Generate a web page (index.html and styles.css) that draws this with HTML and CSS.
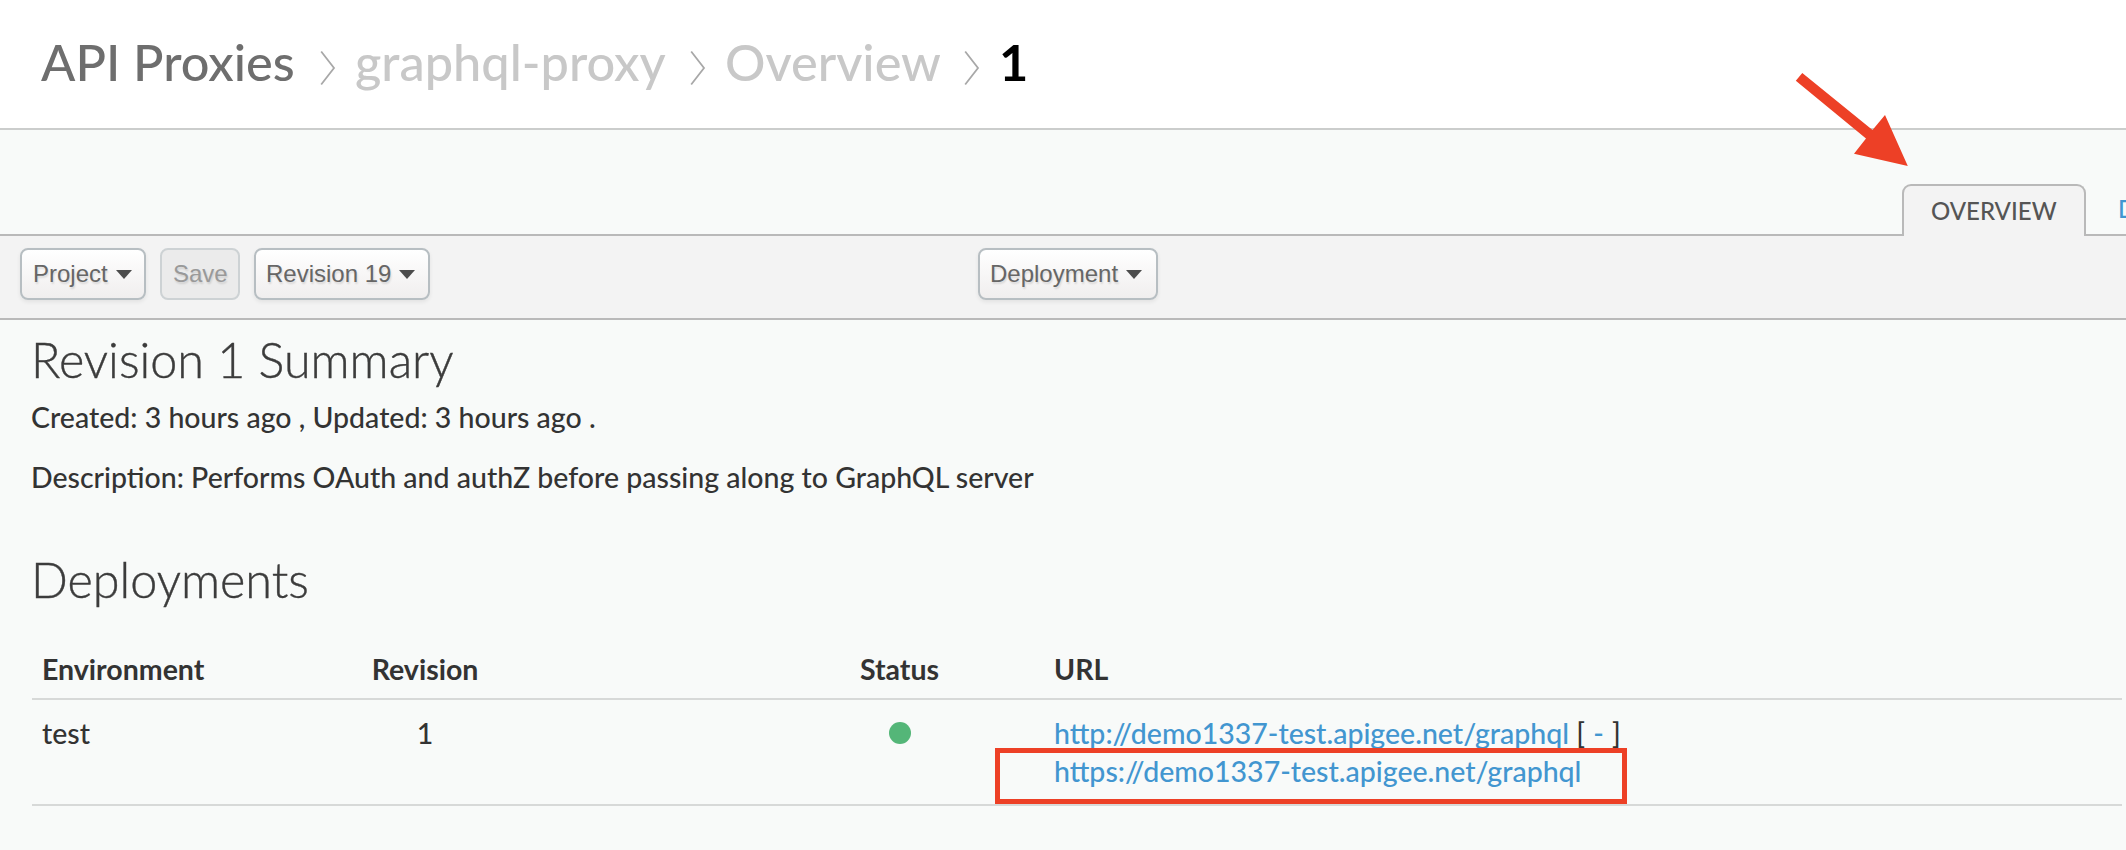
FILE: index.html
```html
<!DOCTYPE html>
<html lang="en">
<head>
<meta charset="utf-8">
<title>API Proxies - graphql-proxy</title>
<link rel="stylesheet" href="styles.css">
</head>
<body>
<header class="header">
  <nav class="crumbs">
    <a class="crumb crumb-root">API Proxies</a>
    <svg class="chevron" width="16" height="36" viewBox="0 0 16 36"><path d="M1.2 1.5 14 18 1.2 34.5"/></svg>
    <a class="crumb crumb-proxy">graphql-proxy</a>
    <svg class="chevron" width="16" height="36" viewBox="0 0 16 36"><path d="M1.2 1.5 14 18 1.2 34.5"/></svg>
    <a class="crumb crumb-view">Overview</a>
    <svg class="chevron" width="16" height="36" viewBox="0 0 16 36"><path d="M1.2 1.5 14 18 1.2 34.5"/></svg>
    <span class="crumb crumb-current">1</span>
  </nav>
</header>
<div class="tabs">
  <a class="tab tab-active">OVERVIEW</a>
  <a class="tab">D</a>
</div>
<div class="toolbar">
  <div class="group">
    <button class="btn btn-project">Project<i class="caret"></i></button>
    <button class="btn btn-save" disabled>Save</button>
    <button class="btn btn-revision">Revision 19<i class="caret"></i></button>
  </div>
  <button class="btn btn-deploy">Deployment<i class="caret"></i></button>
</div>
<main class="content">
  <h2 class="title">Revision 1 Summary</h2>
  <p class="meta">Created: 3 hours ago , Updated: 3 hours ago .</p>
  <p class="meta">Description: Performs OAuth and authZ before passing along to GraphQL server</p>
  <h2 class="title title-deploy">Deployments</h2>
  <div class="table">
    <div class="row row-head">
      <div>Environment</div>
      <div class="center">Revision</div>
      <div class="center status">Status</div>
      <div>URL</div>
    </div>
    <div class="row row-body">
      <div>test</div>
      <div class="center">1</div>
      <div class="center status"><span class="dot"></span></div>
      <div class="urls">
        <div><a class="link">http://demo1337-test.apigee.net/graphql</a> [ <a class="link toggle">-</a> ]</div>
        <div><a class="link">https://demo1337-test.apigee.net/graphql</a></div>
        <div class="highlight"></div>
      </div>
    </div>
  </div>
</main>
<svg class="arrow" width="114" height="96" viewBox="0 0 114 96"><path d="M8.3 3 78.5 60 91 45 113.8 96 60 83.7 72 68.5 1.8 10.7Z"/></svg>
</body>
</html>
```

FILE: styles.css
```css
* { box-sizing: border-box; }
body {
  margin: 0;
  height: 850px;
  position: relative;
  overflow: hidden;
  background: #f8faf9;
  color: #333;
  font: 500 28.5px/38px Lato, "Liberation Sans", sans-serif;
}
.header {
  height: 130px;
  padding: 32px 0 0 41px;
  background: #fff;
  border-bottom: 2px solid #cbcdcc;
}
.crumbs { display: flex; font-size: 50.5px; line-height: 60px; white-space: nowrap; }
.crumb { color: #c8c8c8; }
.crumb-root { width: 279px; color: #6e6e6e; }
.crumb-proxy { width: 335px; }
.crumb-view { width: 239px; }
.crumb-current { color: #000; font-weight: 700; }
.chevron { flex: none; margin: 18px 19px 0 0; fill: none; stroke: #a8a8a8; stroke-width: 1.8; }
.tabs {
  height: 106px;
  display: flex;
  align-items: flex-end;
  padding-left: 1902px;
  border-bottom: 2px solid #b9b9b9;
  overflow: visible;
}
.tab {
  flex: none;
  height: 50px;
  padding: 6px 0 0 32px;
  color: #4296d0;
  font-size: 24px;
  line-height: 38px;
}
.tab-active {
  width: 184px;
  height: 52px;
  margin-bottom: -2px;
  padding: 6px 0 0 27px;
  color: #555;
  background: #f3f3f3;
  border: 2px solid #b9b9b9;
  border-bottom: 0;
  border-radius: 9px 9px 0 0;
}
.toolbar {
  height: 84px;
  display: flex;
  padding: 12px 0 0 20px;
  background: #f3f3f3;
  border-bottom: 2px solid #b9b9b9;
}
.group { display: flex; gap: 14px; width: 958px; }
.btn {
  display: flex;
  align-items: center;
  height: 52px;
  padding: 0 0 0 10px;
  border: 2px solid #b7bec2;
  border-radius: 8px;
  background: linear-gradient(#fff, #f0eeee);
  box-shadow: 0 2px 4px rgba(0, 0, 0, .07);
  color: #666;
  font: 24px/28px "Liberation Sans", Arial, sans-serif;
  text-shadow: 1px 2px 2px rgba(0, 0, 0, .12);
}
.btn-project { width: 126px; padding-left: 11px; }
.btn-save { width: 80px; padding-left: 11px; color: #999; background: #ebebeb; border-color: #cdd2d4; box-shadow: none; }
.btn-revision { width: 176px; }
.btn-deploy { width: 180px; }
.caret {
  margin-left: 8px;
  border: 8.5px solid transparent;
  border-top: 9px solid #4c4c4c;
  border-bottom: 0;
}
.content { padding: 9px 4px 0 32px; }
.title {
  margin: 0 0 0 -1px;
  color: #3c3c3c;
  font-size: 48.5px;
  line-height: 60px;
  font-weight: 300;
  -webkit-text-stroke: .4px #3c3c3c;
}
.meta { margin: 9px 0 22px -1px; }
.meta + .meta { margin-top: 0; }
.title-deploy { margin-top: 53px; }
.table { margin-top: 29px; }
.row {
  display: grid;
  grid-template-columns: 321px 124px 268px 289px 1fr;
  padding-left: 10px;
  border-bottom: 2px solid #d7d9d8;
}
.row > :last-child { padding-left: 10px; }
.row-head { padding-top: 12px; padding-bottom: 10px; font-weight: 700; }
.row-body { padding-top: 14px; padding-bottom: 14px; }
.center { text-align: center; }
.status { grid-column: 4; }
.dot { display: block; width: 22px; height: 22px; margin: 8px auto 0; border-radius: 50%; background: #54b678; }
.urls { position: relative; white-space: nowrap; }
.link { color: #4296d0; }
.toggle { margin: 0 1px; }
.highlight { position: absolute; left: -49px; top: 34px; width: 632px; height: 56px; border: 5px solid #ed4026; }
.arrow { position: absolute; left: 1794px; top: 70px; fill: #ed4026; }
```
